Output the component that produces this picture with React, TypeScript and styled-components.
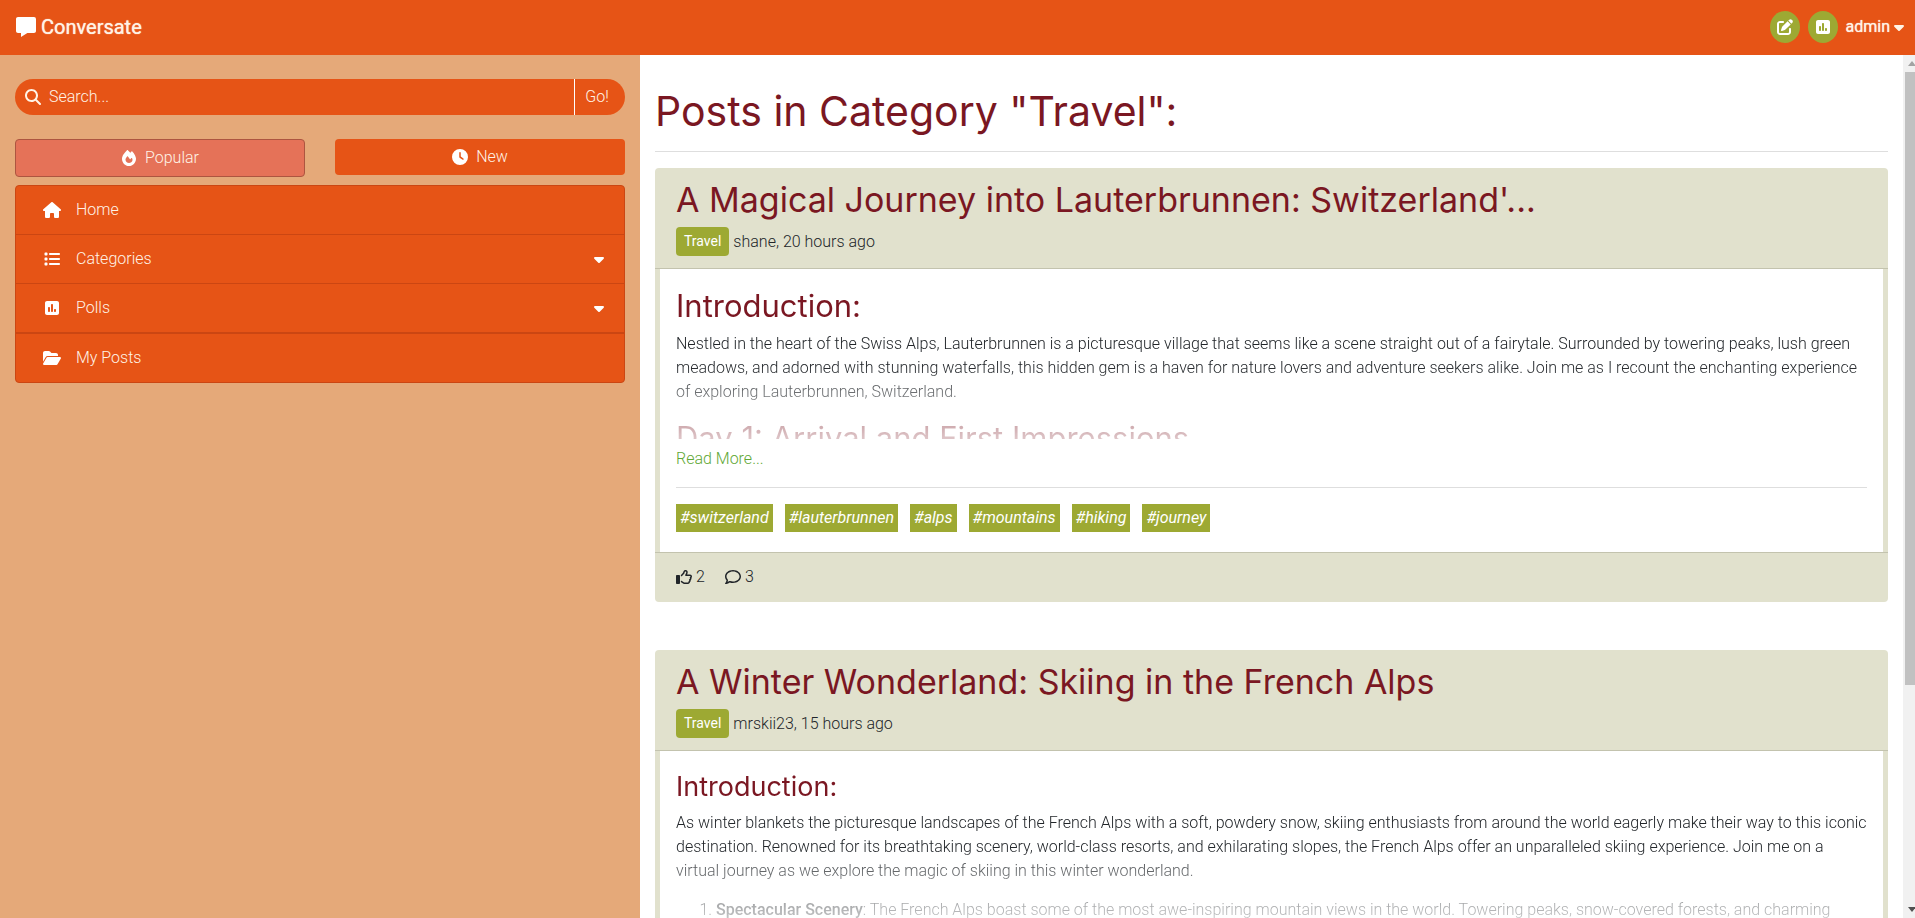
import React from "react";
import styled, { createGlobalStyle } from "styled-components";
import {
  FaCaretDown,
  FaClock,
  FaFire,
  FaFolderOpen,
  FaHouse,
  FaList,
  FaMagnifyingGlass,
  FaPenToSquare,
  FaRegComment,
  FaRegThumbsUp,
  FaSquarePollVertical,
} from "react-icons/fa6";
import { BiSolidMessage } from "react-icons/bi";

const color = {
  orange: "#e65416",
  orangeLine: "#cb4612",
  sand: "#e5a979",
  salmon: "#e57258",
  olive: "#9da933",
  khaki: "#e1e1cd",
  khakiLine: "#c3c3ae",
  wine: "#7a1722",
  ink: "#212529",
  link: "#5fa835",
  cream: "#fff3e6",
};

const GlobalStyle = createGlobalStyle`
  *, *::before, *::after { box-sizing: border-box; }
  body {
    margin: 0;
    background: #fff;
    color: ${color.ink};
    font-family: Roboto, "Liberation Sans", sans-serif;
    font-size: 16px;
    font-weight: 300;
    line-height: 24px;
  }
  h1, h2, h3, p, ul, ol { margin: 0; }
  a { text-decoration: none; }
  button, input { font: inherit; }
`;

const Page = styled.div`
  display: flex;
  flex-direction: column;
  height: 100vh;
  overflow: hidden;
`;

const TopBar = styled.header`
  display: flex;
  flex: none;
  align-items: center;
  justify-content: space-between;
  height: 55px;
  padding: 0 8px 2px 14px;
  background: ${color.orange};
`;

const Brand = styled.a`
  display: flex;
  align-items: center;
  gap: 3px;
  color: ${color.cream};
  font-size: 20px;
  font-weight: 400;
  text-shadow: 0 0 1px ${color.cream};
`;

const Account = styled.div`
  display: flex;
  align-items: center;
  gap: 8px;
`;

const RoundButton = styled.button`
  display: flex;
  align-items: center;
  justify-content: center;
  width: 30px;
  height: 32px;
  padding: 0;
  border: 0;
  border-radius: 50%;
  background: ${color.olive};
  color: #fff;
`;

const UserMenu = styled.button`
  display: flex;
  align-items: center;
  gap: 1px;
  padding: 0;
  border: 0;
  background: none;
  color: ${color.cream};
  font-weight: 400;
  text-shadow: 0 0 1px ${color.cream};
`;

const Columns = styled.div`
  display: grid;
  grid-template-columns: calc((100% + 5px) / 3) 1fr;
  flex: 1;
  min-height: 0;
`;

const Sidebar = styled.aside`
  padding: 24px 15px;
  background: ${color.sand};
`;

const SearchForm = styled.form`
  display: flex;
  height: 36px;
  overflow: hidden;
  border-radius: 18px;
  background: ${color.orange};
  color: ${color.cream};
`;

const SearchField = styled.label`
  display: flex;
  flex: 1;
  align-items: center;
  gap: 8px;
  padding-left: 10px;
`;

const SearchInput = styled.input`
  flex: 1;
  min-width: 0;
  height: 100%;
  padding: 0 0 1px;
  border: 0;
  outline: 0;
  background: none;
  color: inherit;
  &::placeholder {
    color: ${color.cream};
    opacity: 1;
  }
`;

const GoButton = styled.button`
  width: 51px;
  padding: 0 6px 1px 0;
  border: 0;
  border-left: 1px solid #fff;
  background: none;
  color: inherit;
`;

const SortTabs = styled.div`
  display: grid;
  grid-template-columns: 1fr 1fr;
  align-items: start;
  gap: 30px;
  margin: 24px 0 8px;
`;

const SortButton = styled.button<{ $active?: boolean }>`
  display: flex;
  align-items: center;
  justify-content: center;
  gap: 8px;
  padding: 6px 12px;
  border: ${(p) => (p.$active ? "1px solid #ad5540" : "0")};
  border-radius: 4px;
  background: ${(p) => (p.$active ? color.salmon : color.orange)};
  color: ${color.cream};
`;

const Menu = styled.nav`
  display: flex;
  flex-direction: column;
  border: 1px solid ${color.orangeLine};
  border-radius: 4px;
  background: ${color.orange};
`;

const MenuLink = styled.a<{ $rule: number }>`
  display: flex;
  align-items: center;
  padding: 12px 17px 12px 26px;
  border-top: ${(p) => p.$rule}px solid ${color.orangeLine};
  color: ${color.cream};
`;

const MenuIcon = styled.span<{ $wide?: boolean }>`
  display: flex;
  justify-content: center;
  width: 20px;
  margin-right: 14px;
  color: #fff;
  font-size: ${(p) => (p.$wide ? 18 : 16)}px;
`;

const MenuLabel = styled.span`
  flex: 1;
`;

const Feed = styled.div`
  display: flex;
  min-width: 0;
  min-height: 0;
`;

const FeedContent = styled.main`
  flex: 1;
  min-width: 0;
  overflow: hidden;
  padding: 32px 15px 0;
`;

const PageTitle = styled.h1`
  color: ${color.wine};
  font-family: Inter, "Open Sans", sans-serif;
  font-size: 41px;
  font-weight: 400;
  line-height: 48px;
`;

const Rule = styled.hr`
  height: 1px;
  margin: 16px 0;
  border: 0;
  background: #dedede;
`;

const Card = styled.article`
  margin-bottom: 48px;
  border-radius: 4px;
  background: ${color.khaki};
`;

const CardHeader = styled.div`
  padding: 12px 21px;
  border-bottom: 1px solid ${color.khakiLine};
`;

const CardTitle = styled.h2`
  margin-bottom: 8px;
  color: ${color.wine};
  font-family: Inter, "Open Sans", sans-serif;
  font-size: 34px;
  font-weight: 400;
  line-height: 39px;
`;

const Byline = styled.div`
  display: flex;
  align-items: center;
  gap: 4px;
`;

const Badge = styled.a`
  padding: 4px 8px;
  border-radius: 4px;
  background: ${color.olive};
  color: #fff;
  font-size: 14px;
  font-weight: 400;
  line-height: 21px;
`;

const CardBody = styled.div`
  margin: 0 5px;
  padding: 18px 16px 20px;
  background: #fff;
`;

const Excerpt = styled.div`
  height: 152px;
  overflow: hidden;
  mask-image: linear-gradient(
    #000 78px,
    rgba(0, 0, 0, 0.65) 106px,
    rgba(0, 0, 0, 0.35) 140px,
    rgba(0, 0, 0, 0.25) 152px
  );
`;

const SectionTitle = styled.h3<{ $large?: boolean }>`
  margin-bottom: ${(p) => (p.$large ? 7 : 6)}px;
  color: ${color.wine};
  font-family: Inter, "Open Sans", sans-serif;
  font-size: ${(p) => (p.$large ? 31 : 27)}px;
  font-weight: 400;
  line-height: ${(p) => (p.$large ? 38 : 36)}px;
`;

const Paragraph = styled.p`
  margin-bottom: 15px;
`;

const Highlights = styled.ol`
  padding-left: 40px;
  strong {
    font-weight: 500;
  }
`;

const ReadMore = styled.a`
  display: block;
  margin-top: 8px;
  color: ${color.link};
`;

const Tags = styled.div`
  display: flex;
  flex-wrap: wrap;
  gap: 12px;
`;

const Tag = styled.a`
  padding: 2px 4px;
  background: ${color.olive};
  color: #fff;
  font-style: italic;
  font-weight: 400;
`;

const CardFooter = styled.footer`
  display: flex;
  gap: 20px;
  padding: 12px 21px 13px;
  border-top: 1px solid ${color.khakiLine};
`;

const Count = styled.button`
  display: flex;
  align-items: center;
  gap: 4px;
  padding: 0;
  border: 0;
  background: none;
  color: ${color.ink};
`;

const ScrollTrack = styled.div`
  display: flex;
  flex: none;
  flex-direction: column;
  align-items: flex-end;
  width: 12px;
  background: #f1f1f1;
`;

const ScrollArrow = styled.svg`
  flex: none;
  width: 10px;
  height: 17px;
`;

const ScrollThumb = styled.div`
  width: 10px;
  height: 71%;
  margin-bottom: auto;
  background: #c1c1c1;
`;

type Post = {
  title: string;
  author: string;
  age: string;
  body: React.ReactNode;
  tags: string[];
  likes: number;
  comments: number;
};

const posts: Post[] = [
  {
    title: "A Magical Journey into Lauterbrunnen: Switzerland'...",
    author: "shane",
    age: "20 hours ago",
    body: (
      <>
        <SectionTitle $large>Introduction:</SectionTitle>
        <Paragraph>
          Nestled in the heart of the Swiss Alps, Lauterbrunnen is a picturesque village that seems like a
          scene straight out of a fairytale. Surrounded by towering peaks, lush green meadows, and adorned
          with stunning waterfalls, this hidden gem is a haven for nature lovers and adventure seekers alike.
          Join me as I recount the enchanting experience of exploring Lauterbrunnen, Switzerland.
        </Paragraph>
        <SectionTitle $large>Day 1: Arrival and First Impressions</SectionTitle>
      </>
    ),
    tags: ["switzerland", "lauterbrunnen", "alps", "mountains", "hiking", "journey"],
    likes: 2,
    comments: 3,
  },
  {
    title: "A Winter Wonderland: Skiing in the French Alps",
    author: "mrskii23",
    age: "15 hours ago",
    body: (
      <>
        <SectionTitle>Introduction:</SectionTitle>
        <Paragraph>
          As winter blankets the picturesque landscapes of the French Alps with a soft, powdery snow, skiing
          enthusiasts from around the world eagerly make their way to this iconic destination. Renowned for
          its breathtaking scenery, world-class resorts, and exhilarating slopes, the French Alps offer an
          unparalleled skiing experience. Join me on a virtual journey as we explore the magic of skiing in
          this winter wonderland.
        </Paragraph>
        <Highlights>
          <li>
            <strong>Spectacular Scenery</strong>: The French Alps boast some of the most awe-inspiring
            mountain views in the world. Towering peaks, snow-covered forests, and charming
          </li>
        </Highlights>
      </>
    ),
    tags: [],
    likes: 0,
    comments: 0,
  },
];

function PostCard({ post }: { post: Post }) {
  return (
    <Card>
      <CardHeader>
        <CardTitle>{post.title}</CardTitle>
        <Byline>
          <Badge href="#travel">Travel</Badge>
          <span>
            {post.author}, {post.age}
          </span>
        </Byline>
      </CardHeader>
      <CardBody>
        <Excerpt>{post.body}</Excerpt>
        {post.tags.length > 0 && (
          <>
            <ReadMore href="#post">Read More...</ReadMore>
            <Rule />
            <Tags>
              {post.tags.map((tag) => (
                <Tag key={tag} href={`#${tag}`}>
                  #{tag}
                </Tag>
              ))}
            </Tags>
          </>
        )}
      </CardBody>
      {post.tags.length > 0 && (
        <CardFooter>
          <Count aria-label="Likes">
            <FaRegThumbsUp />
            {post.likes}
          </Count>
          <Count aria-label="Comments">
            <FaRegComment />
            {post.comments}
          </Count>
        </CardFooter>
      )}
    </Card>
  );
}

export default function App() {
  return (
    <Page>
      <GlobalStyle />
      <TopBar>
        <Brand href="#home">
          <BiSolidMessage size={24} color="#fff" />
          Conversate
        </Brand>
        <Account>
          <RoundButton aria-label="New post">
            <FaPenToSquare size={16} />
          </RoundButton>
          <RoundButton aria-label="New poll">
            <FaSquarePollVertical size={16} />
          </RoundButton>
          <UserMenu>
            admin
            <FaCaretDown size={16} />
          </UserMenu>
        </Account>
      </TopBar>
      <Columns>
        <Sidebar>
          <SearchForm>
            <SearchField>
              <FaMagnifyingGlass size={16} />
              <SearchInput type="text" placeholder="Search..." aria-label="Search" />
            </SearchField>
            <GoButton type="button">Go!</GoButton>
          </SearchForm>
          <SortTabs>
            <SortButton $active>
              <FaFire color="#fff" />
              Popular
            </SortButton>
            <SortButton>
              <FaClock color="#fff" />
              New
            </SortButton>
          </SortTabs>
          <Menu>
            <MenuLink href="#home" $rule={0}>
              <MenuIcon $wide>
                <FaHouse />
              </MenuIcon>
              <MenuLabel>Home</MenuLabel>
            </MenuLink>
            <MenuLink href="#categories" $rule={1}>
              <MenuIcon>
                <FaList />
              </MenuIcon>
              <MenuLabel>Categories</MenuLabel>
              <FaCaretDown color="#fff" />
            </MenuLink>
            <MenuLink href="#polls" $rule={1}>
              <MenuIcon>
                <FaSquarePollVertical />
              </MenuIcon>
              <MenuLabel>Polls</MenuLabel>
              <FaCaretDown color="#fff" />
            </MenuLink>
            <MenuLink href="#my-posts" $rule={2}>
              <MenuIcon $wide>
                <FaFolderOpen />
              </MenuIcon>
              <MenuLabel>My Posts</MenuLabel>
            </MenuLink>
          </Menu>
        </Sidebar>
        <Feed>
          <FeedContent>
            <PageTitle>Posts in Category "Travel":</PageTitle>
            <Rule />
            {posts.map((post) => (
              <PostCard key={post.title} post={post} />
            ))}
          </FeedContent>
          <ScrollTrack aria-hidden="true">
            <ScrollArrow viewBox="0 0 10 17">
              <path d="M3 11 L7 6 L11 11 Z" fill="#a3a3a3" />
            </ScrollArrow>
            <ScrollThumb />
            <ScrollArrow viewBox="0 0 10 17">
              <path d="M3 6 L7 11 L11 6 Z" fill="#505050" />
            </ScrollArrow>
          </ScrollTrack>
        </Feed>
      </Columns>
    </Page>
  );
}
